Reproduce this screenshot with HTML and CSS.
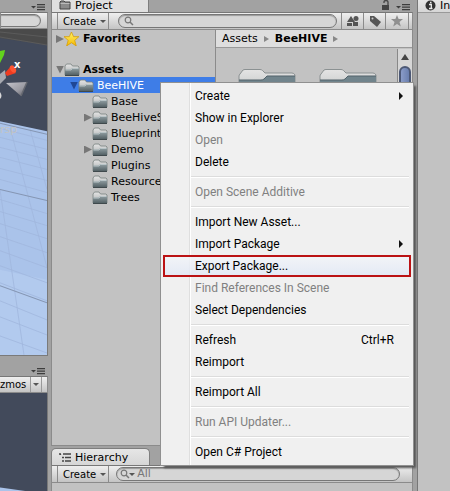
FILE: index.html
```html
<!DOCTYPE html>
<html lang="en">
<head>
<meta charset="utf-8">
<title>Project</title>
<link rel="stylesheet" href="styles.css">
</head>
<body>
<svg class="defs" aria-hidden="true">
  <defs>
    <linearGradient id="front" x1="0" y1="0" x2="0" y2="1">
      <stop offset="0" stop-color="#93a1a5"/><stop offset="1" stop-color="#4f5c60"/>
    </linearGradient>
    <linearGradient id="back" x1="0" y1="0" x2="0" y2="1">
      <stop offset="0" stop-color="#e4e4e4"/><stop offset="1" stop-color="#a9adae"/>
    </linearGradient>
    <linearGradient id="gold" x1="0" y1="0" x2="0" y2="1">
      <stop offset="0" stop-color="#fff36a"/><stop offset="1" stop-color="#f5b800"/>
    </linearGradient>
    <linearGradient id="cone" x1="0" y1="0" x2="1" y2="1">
      <stop offset="0" stop-color="#c4c4cb"/><stop offset=".6" stop-color="#9a9aa2"/><stop offset="1" stop-color="#5c5c63"/>
    </linearGradient>
    <symbol id="folder" viewBox="0 0 16 14">
      <path d="M1 12V3l1.500-2H7l1.500 2H14l1 1v8z" fill="url(#back)" stroke="#77807f" stroke-width=".8"/>
      <path d="M1 6.500h5.500L8.500 5H15v7.500H1z" fill="url(#front)"/>
      <path d="M1.500 7H7l1.500-1.500h6" fill="none" stroke="#c3ced0" stroke-width=".8"/>
      <path d="M1 12.500h14" stroke="#3f494c"/>
    </symbol>
    <symbol id="big-folder" viewBox="0 0 58 40">
      <path d="M1 40V7q0-1 1-2l3-4q1-.5 2-.5h15q1.500 0 2.500 1L27 4h27q2 0 3 2v34z" fill="url(#back)" stroke="#8b9192"/>
      <path d="M1 11h22q2 0 3-1l3-3h28v33H1z" fill="#71848c"/>
      <path d="M1 11h22q2 0 3-1l3-3h28" fill="none" stroke="#52636b"/>
    </symbol>
    <symbol id="magnifier" viewBox="0 0 10 10">
      <circle cx="4" cy="4" r="2.800" fill="none" stroke="#777" stroke-width="1.200"/>
      <path d="M6 6l3 3" stroke="#777" stroke-width="1.500"/>
    </symbol>
    <symbol id="pane-menu" viewBox="0 0 14 7">
      <path d="M0 2h5L2.500 4.500zM6 0h8v1.200H6zM6 2.500h8v1.200H6zM6 5h8v1.200H6z" fill="#3d3d3d"/>
    </symbol>
  </defs>
</svg>

<main class="editor">
  <section class="views" aria-label="Views">
    <div class="strip strip-top"><svg class="pane-menu"><use href="#pane-menu"/></svg></div>
    <div class="toolbar"><input class="search search-scene" type="text" aria-label="Search scene"></div>
    <div class="scene">
      <svg class="scene-art" viewBox="0 0 47 325" preserveAspectRatio="none" aria-hidden="true">
        <path d="M0 0h47v325H0z" fill="#424a5b"/>
        <path d="M0 0h47v16L0 9z" fill="#4a4a4a"/>
        <path d="M0 3l47 5M0 8l47 8" stroke="#5b5b5b" fill="none"/>
        <path d="M0 92l47 10v223H0z" fill="#aac3ea"/>
        <path d="M0 240l47 10v75H0z" fill="#b2caee"/>
        <g fill="none" stroke="#a0b7dd" stroke-width=".8">
          <path d="M0 99l47 12M0 108l47 12M0 118l47 12M0 128l47 12M0 139l47 12M0 150l47 13M0 170l47 14M0 182l47 14M0 194l47 15M0 207l47 16M0 221l47 17M0 236l47 17M0 253l47 18M0 271l47 19M0 287l47 18M0 306l47 17"/>
          <path d="M10 98l37 140M0 160l24 165M30 100l17 60"/>
        </g>
        <path d="M0 94l47 11M0 160l47 11M0 256l47 17" fill="none" stroke="#8596b3"/>
      </svg>
      <svg class="gizmo" viewBox="0 0 30 60" aria-hidden="true">
        <path d="M0 4l5-1-1 5-4 8z" fill="#62d21d"/>
        <path d="M0 27l5-4 1 8-6 6z" fill="#a7a9b0"/>
        <path d="M5 26l6-7 5 7-9 3z" fill="#ef3b20"/>
        <ellipse cx="13" cy="22" rx="2.500" ry="4" transform="rotate(-35 13 22)" fill="#ff5532"/>
        <path d="M6 36l21-1-6 14z" fill="url(#cone)"/>
        <path d="M27 35l-6 14" stroke="#666971" stroke-width="1.500"/>
        <path d="M0 45q3 4 0 7z" fill="#d8d8da"/>
      </svg>
      <span class="axis">x</span>
      <span class="persp">rsp</span>
    </div>
    <div class="strip strip-mid"><svg class="pane-menu"><use href="#pane-menu"/></svg></div>
    <div class="toolbar toolbar-game"><button class="gizmos" type="button">zmos</button><button class="drop" type="button" aria-label="Gizmo options"></button></div>
    <div class="game"></div>
  </section>

  <section class="project" aria-label="Project">
    <div class="strip strip-top">
      <h2 class="tab tab-top">
        <svg class="tab-icon" viewBox="0 0 12 10"><path d="M1 9V2l1-1h3l1 1h5v7z" fill="#8b8b8b" stroke="#444"/><path d="M1.500 3.500h9" stroke="#bbb"/></svg>Project</h2>
      <svg class="lock" viewBox="0 0 9 10"><path d="M1 5h7v5H1z" fill="#444"/><path d="M3 3V2q0-1.500 2-1.500T7 2v3" fill="none" stroke="#444" stroke-width="1.300"/></svg>
      <svg class="pane-menu"><use href="#pane-menu"/></svg>
    </div>
    <div class="toolbar">
      <button class="create" type="button">Create</button>
      <label class="search-box"><svg class="glass"><use href="#magnifier"/></svg><input type="text" aria-label="Search project"></label>
      <button class="tool" type="button" aria-label="Filter by type"><svg viewBox="0 0 14 12"><path d="M5 1l4 6H1z" fill="#555"/><circle cx="10" cy="3.500" r="2.500" fill="#555"/><path d="M7 7h5v4H7z" fill="#555"/><path d="M1 8h5v3H1z" fill="#555"/></svg></button>
      <button class="tool" type="button" aria-label="Filter by label"><svg viewBox="0 0 14 12"><path d="M2 1h4l7 6-4 5-7-6z" fill="#555"/><circle cx="4.500" cy="3.500" r="1" fill="#ccc"/></svg></button>
      <button class="tool" type="button" aria-label="Save search"><svg viewBox="0 0 14 12"><path d="M7 0l1.600 4H13L9.500 7l1.300 4.500L7 9l-3.800 2.500L4.500 7 1 4h4.400z" fill="#8f8f8f"/></svg></button>
    </div>
    <div class="browser">
      <ul class="tree">
        <li class="row root favorites"><i class="arrow"></i><svg class="icon"><path d="M8 0l2.300 5H16l-4.500 4 1.700 6L8 11.500 2.800 15l1.700-6L0 5h5.700z" transform="scale(.93)" fill="url(#gold)" stroke="#d79b00" stroke-width=".8"/></svg>Favorites</li>
        <li class="row root"><i class="arrow open"></i><svg class="icon"><use href="#folder"/></svg>Assets</li>
        <li class="row level1 selected"><i class="arrow open"></i><svg class="icon"><use href="#folder"/></svg>BeeHIVE</li>
        <li class="row level2"><i class="arrow none"></i><svg class="icon"><use href="#folder"/></svg>Base</li>
        <li class="row level2"><i class="arrow"></i><svg class="icon"><use href="#folder"/></svg>BeeHiveS</li>
        <li class="row level2"><i class="arrow none"></i><svg class="icon"><use href="#folder"/></svg>Blueprint</li>
        <li class="row level2"><i class="arrow"></i><svg class="icon"><use href="#folder"/></svg>Demo</li>
        <li class="row level2"><i class="arrow none"></i><svg class="icon"><use href="#folder"/></svg>Plugins</li>
        <li class="row level2"><i class="arrow none"></i><svg class="icon"><use href="#folder"/></svg>Resource</li>
        <li class="row level2"><i class="arrow none"></i><svg class="icon"><use href="#folder"/></svg>Trees</li>
      </ul>
      <div class="contents">
        <nav class="crumbs" aria-label="Path"><a href="#assets">Assets</a><i class="crumb"></i><a href="#beehive"><b>BeeHIVE</b></a><i class="crumb"></i></nav>
        <div class="listing">
          <div class="grid">
            <svg class="big"><use href="#big-folder"/></svg>
            <svg class="big"><use href="#big-folder"/></svg>
          </div>
          <div class="scroll"><i class="up"></i><div class="thumb"></div></div>
        </div>
      </div>
    </div>
    <div class="strip strip-hierarchy">
      <h2 class="tab"><svg class="tab-icon" viewBox="0 0 12 10"><path d="M0 1h2M4 1h8M3 4.500h2M6 4.500h6M3 8h2M6 8h6M1.500 1v1" fill="none" stroke="#444" stroke-width="1.300"/></svg>Hierarchy</h2>
    </div>
    <div class="toolbar">
      <button class="create" type="button">Create</button>
      <label class="search-box search-all"><svg class="glass"><use href="#magnifier"/></svg><i class="mini"></i><input type="text" placeholder="All" aria-label="Search hierarchy"></label>
    </div>
    <div class="hierarchy"></div>
  </section>

  <section class="inspector" aria-label="Inspector">
    <h2 class="tab tab-info"><svg class="info" viewBox="0 0 11 11"><circle cx="5.500" cy="5.500" r="5" fill="#333"/><path d="M4 4.500h2.300V8M4 8.500h3.500M5 2.500h1.500" fill="none" stroke="#eee" stroke-width="1.300"/></svg>In</h2>
  </section>
</main>

<div class="menu" role="menu">
  <button type="button" role="menuitem">Create<i class="sub"></i></button>
  <button type="button" role="menuitem">Show in Explorer</button>
  <button type="button" role="menuitem" disabled>Open</button>
  <button type="button" role="menuitem">Delete</button>
  <hr>
  <button type="button" role="menuitem" disabled>Open Scene Additive</button>
  <hr>
  <button type="button" role="menuitem">Import New Asset...</button>
  <button type="button" role="menuitem">Import Package<i class="sub"></i></button>
  <button class="marked" type="button" role="menuitem">Export Package...</button>
  <button type="button" role="menuitem" disabled>Find References In Scene</button>
  <button type="button" role="menuitem">Select Dependencies</button>
  <hr>
  <button type="button" role="menuitem">Refresh<kbd>Ctrl+R</kbd></button>
  <button type="button" role="menuitem">Reimport</button>
  <hr>
  <button type="button" role="menuitem">Reimport All</button>
  <hr>
  <button type="button" role="menuitem" disabled>Run API Updater...</button>
  <hr>
  <button type="button" role="menuitem">Open C# Project</button>
</div>
</body>
</html>
```
FILE: styles.css
```css
* { box-sizing: border-box; }

body {
  margin: 0;
  height: 100vh;
  overflow: hidden;
  background: #a2a2a2;
  color: #000;
  font: 11px/16px "DejaVu Sans", Verdana, sans-serif;
}

button, input { font: inherit; color: inherit; }

.defs { position: absolute; width: 0; height: 0; }

.editor {
  display: grid;
  grid-template-columns: 48px minmax(0, 1fr) 33px;
  column-gap: 3px;
  height: 100%;
}

.views {
  display: grid;
  grid-template-rows: 12px 17px 327fr 20px 17px 98fr;
  min-height: 0;
}

.project {
  display: grid;
  grid-template-rows: 12px 18px 416fr 19px 18px 8fr;
  min-width: 0;
  min-height: 0;
  margin-right: 1px;
}

/* Tab strips */

.strip {
  display: flex;
  justify-content: flex-end;
  align-items: flex-end;
  gap: 6px;
  min-width: 0;
  padding-right: 3px;
}

.pane-menu { width: 14px; height: 7px; }
.strip-top .pane-menu, .strip-mid .pane-menu { margin-bottom: 1px; }
.lock { width: 9px; height: 10px; margin-bottom: 2px; }

.tab {
  display: flex;
  align-items: center;
  gap: 4px;
  width: 99px;
  height: 17px;
  margin: 0 auto 0 0;
  padding: 1px 7px 0;
  border: 1px solid #7e7e7e;
  border-bottom: 0;
  border-radius: 5px 5px 0 0;
  background: linear-gradient(#e6e6e6, #d6d6d6);
  font-size: 11px;
  font-weight: normal;
}

.tab-icon { width: 12px; height: 10px; }

.tab-top {
  align-items: flex-start;
  width: 98px;
  height: 12px;
  padding-top: 0;
  border-top: 0;
  border-radius: 0;
  background: #e0e0e0;
  line-height: 12px;
}

/* Toolbars */

.toolbar {
  display: flex;
  align-items: center;
  min-width: 0;
  border: 1px solid #8b8b8b;
  border-top-color: #777;
  background: linear-gradient(#efefef, #c4c4c4);
}

.create {
  display: flex;
  align-items: center;
  align-self: stretch;
  gap: 4px;
  margin-left: 5px;
  padding: 1px 2px 0 5px;
  border: solid #8b8b8b;
  border-width: 0 1px;
  background: none;
  font-size: 10px;
}

.create::after, .drop::after, .mini {
  content: "";
  border: 3px solid transparent;
  border-top: 3px solid #555;
  border-bottom: 0;
}

.search, .search-box {
  border: 1px solid #777;
  border-radius: 7px;
  background: #d6d6d6;
  box-shadow: inset 0 1px 1px #999;
}

.search {
  width: 100%;
  height: 13px;
  margin-right: 6px;
  padding: 0;
  border-left: 0;
  border-radius: 0 7px 7px 0;
}

.search-box {
  display: flex;
  align-items: center;
  flex: 1;
  min-width: 0;
  height: 14px;
  margin: 0 4px 0 9px;
  padding-left: 5px;
}

.search-box input {
  flex: 1;
  min-width: 0;
  padding: 0 2px;
  border: 0;
  background: none;
  line-height: 12px;
}

.search-box input::placeholder { color: #777; opacity: 1; }
.search-all { margin: 0 12px 0 7px; padding-left: 3px; }
.glass { flex: none; width: 10px; height: 10px; }
.mini { margin-left: -1px; }

.tool {
  display: grid;
  place-items: center;
  align-self: stretch;
  width: 22px;
  padding: 0;
  border: 0;
  border-left: 1px solid #8b8b8b;
  background: none;
}

.tool svg { width: 14px; height: 12px; }

.tool:last-child {
  width: 27px;
  padding-right: 5px;
  background: linear-gradient(#8b8b8b, #8b8b8b) 22px 0 / 1px 100% no-repeat;
}

/* Scene and game views */

.scene {
  position: relative;
  min-height: 0;
  overflow: hidden;
  border: solid #7a7a7a;
  border-width: 0 1px 1px 0;
}

.scene-art { display: block; width: 100%; height: 100%; }
.gizmo { position: absolute; top: 18px; left: 0; width: 30px; height: 60px; }

.axis {
  position: absolute;
  top: 28px;
  left: 14px;
  color: #fff;
  font-size: 10px;
  font-weight: bold;
}

.persp { position: absolute; top: 93px; left: 0; color: #c3c3c3; }

.toolbar-game { border-left: 0; font-size: 10px; }
.gizmos { padding: 0; border: 0; background: none; }

.drop {
  display: grid;
  place-items: center;
  align-self: stretch;
  width: 12px;
  margin-left: 4px;
  padding: 0;
  border: solid #999;
  border-width: 0 1px;
  background: none;
}

.game {
  border-right: 1px solid #7a7a7a;
  background: linear-gradient(8deg, #aac3ea 3px, #424a5b 4px);
}

/* Project browser */

.browser {
  display: grid;
  grid-template-columns: 164px minmax(0, 1fr);
  min-height: 0;
  border: solid #8b8b8b;
  border-width: 0 1px 1px;
  background: #c2c2c2;
}

.tree {
  margin: 0;
  padding: 0;
  overflow: hidden;
  border-right: 1px solid #8b8b8b;
  list-style: none;
}

.row {
  display: flex;
  align-items: center;
  height: 16px;
  padding-top: 1px;
  white-space: nowrap;
}

.icon { flex: none; width: 16px; height: 14px; margin-right: 3px; }
.root { padding-left: 4px; font-weight: bold; }
.favorites { margin-bottom: 15px; padding-top: 2px; }
.level1 { padding-left: 18px; }
.level2 { padding-left: 32px; }
.selected { background: #3e7de7; color: #fff; }

.arrow {
  flex: none;
  width: 8px;
  height: 8px;
  background: #777;
  clip-path: polygon(0 0, 100% 50%, 0 100%);
}

.open { clip-path: polygon(0 0, 100% 0, 50% 100%); }
.selected .arrow { background: #1f4795; }
.none { visibility: hidden; }

.contents { display: flex; flex-direction: column; min-width: 0; }

.crumbs {
  display: flex;
  align-items: center;
  gap: 6px;
  height: 18px;
  padding: 1px 6px 0;
  border-bottom: 1px solid #999;
  background: #dedede;
}

.crumbs a { color: inherit; text-decoration: none; }

.crumb {
  border: 3px solid transparent;
  border-left: 5px solid #888;
  border-right: 0;
}

.listing { display: flex; flex: 1; min-height: 0; }
.grid { display: flex; flex: 1; gap: 23px; padding: 21px 0 0 22px; }
.big { width: 58px; height: 40px; }

.scroll {
  width: 15px;
  margin-top: 1px;
  padding: 5px 1px 0;
  border-left: 1px solid #888;
  background: #d6d6d6;
}

.up {
  display: block;
  width: 8px;
  height: 6px;
  margin: 0 auto 6px;
  background: #444;
  clip-path: polygon(50% 0, 100% 100%, 0 100%);
}

.thumb {
  height: 100px;
  border: 2px solid #4c5875;
  border-radius: 6px;
  background: linear-gradient(90deg, #8a9cc8, #6a7fae);
}

.hierarchy { border: solid #8b8b8b; border-width: 0 1px; background: #c2c2c2; }

/* Inspector */

.inspector { border-left: 1px solid #777; background: #c2c2c2; }

.tab-info {
  align-items: flex-start;
  width: auto;
  height: 13px;
  margin: 0;
  padding: 0 0 0 7px;
  border: 0;
  border-bottom: 1px solid #999;
  border-radius: 0;
  line-height: 12px;
}

.info { flex: none; width: 11px; height: 11px; }

/* Context menu */

.menu {
  position: absolute;
  top: 82px;
  left: 160px;
  width: 254px;
  padding: 2px;
  border: 1px solid #909090;
  background: linear-gradient(90deg, transparent 28px, #dfdfdf 28px, #dfdfdf 29px, #fff 29px, #fff 30px, transparent 30px) #f0f0f0;
  box-shadow: 3px 3px 2px -1px #555;
  font: 12px/20px Roboto, "Segoe UI", sans-serif;
}

.menu button {
  display: flex;
  align-items: center;
  width: 100%;
  height: 22px;
  padding: 0 17px 0 32px;
  border: 0;
  background: none;
  text-align: left;
  white-space: nowrap;
}

.menu button:disabled { color: #808080; }

.menu .marked {
  border: 2px solid #bb1214;
  padding-left: 30px;
  background: linear-gradient(rgba(242, 245, 249, .8), rgba(225, 232, 246, .8));
}

.menu hr {
  height: 2px;
  margin: 3px 2px 3px 28px;
  border: 0;
  border-top: 1px solid #dcdcdc;
  background: #fff;
}

.menu kbd { margin-left: auto; font: inherit; }

.sub {
  margin: 0 -9px 0 auto;
  border: 4px solid transparent;
  border-left: 4px solid #111;
  border-right: 0;
}
```
